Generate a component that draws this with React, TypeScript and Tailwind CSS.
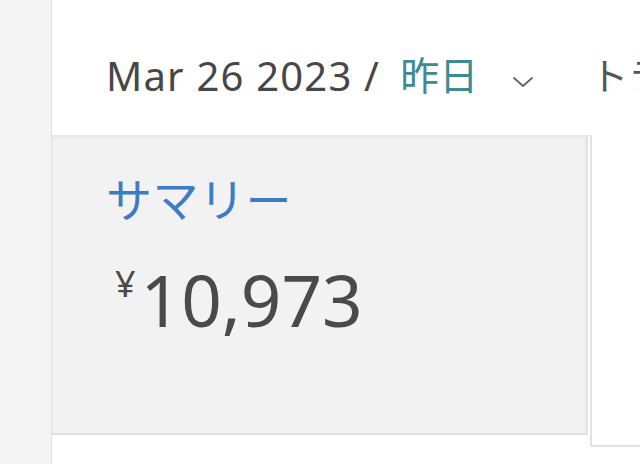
const font = { fontFamily: '"Noto Sans", "Noto Sans CJK JP", sans-serif' };

function Chevron() {
  return (
    <svg width="22" height="12" viewBox="0 0 22 12" className="shrink-0 ml-[34px] mt-[12px] text-[#666]">
      <polyline points="2,2 11,10 20,2" fill="none" stroke="currentColor" strokeWidth="1.8" strokeLinecap="round" strokeLinejoin="round" />
    </svg>
  );
}

export default function App() {
  return (
    <div className="w-[640px] h-[464px] overflow-hidden flex bg-white" style={font}>
      <div className="w-[52px] shrink-0 bg-[#f3f3f3] border-r border-[#e2e2e2]" />
      <div className="flex-1 flex flex-col min-w-0">
        <header className="h-[135px] shrink-0 flex items-center pl-[54px] pt-[16px] whitespace-nowrap overflow-hidden text-[#474747]">
          <span className="shrink-0 text-[40px] tracking-[1.2px]">Mar 26 2023 /</span>
          <span className="shrink-0 text-[39px] text-[#3d8a93] ml-[20px]">昨日</span>
          <Chevron />
          <span className="shrink-0 text-[38px] ml-[56px] text-[#555]">トラ</span>
        </header>
        <div className="flex items-start">
          <section className="w-[536px] h-[300px] shrink-0 bg-[#f2f2f2] border-r-2 border-b-2 border-[#e0e0e0] shadow-[inset_0_2px_3px_rgba(0,0,0,0.06)] pl-[54px] pt-[41px]">
            <h2 className="text-[46px] leading-none text-[#3b7cc4] tracking-[0.5px]">サマリー</h2>
            <div className="mt-[50px] flex items-start text-[#4a4a4a]">
              <span className="text-[36px] leading-none -mt-[6px] ml-[9px] mr-[5px]">¥</span>
              <span className="text-[71px] leading-[56px]">10,973</span>
            </div>
          </section>
          <section className="flex-1 h-[312px] border-l-2 border-b-2 border-[#e3e3e3] ml-[2px] bg-white" />
        </div>
      </div>
    </div>
  );
}
